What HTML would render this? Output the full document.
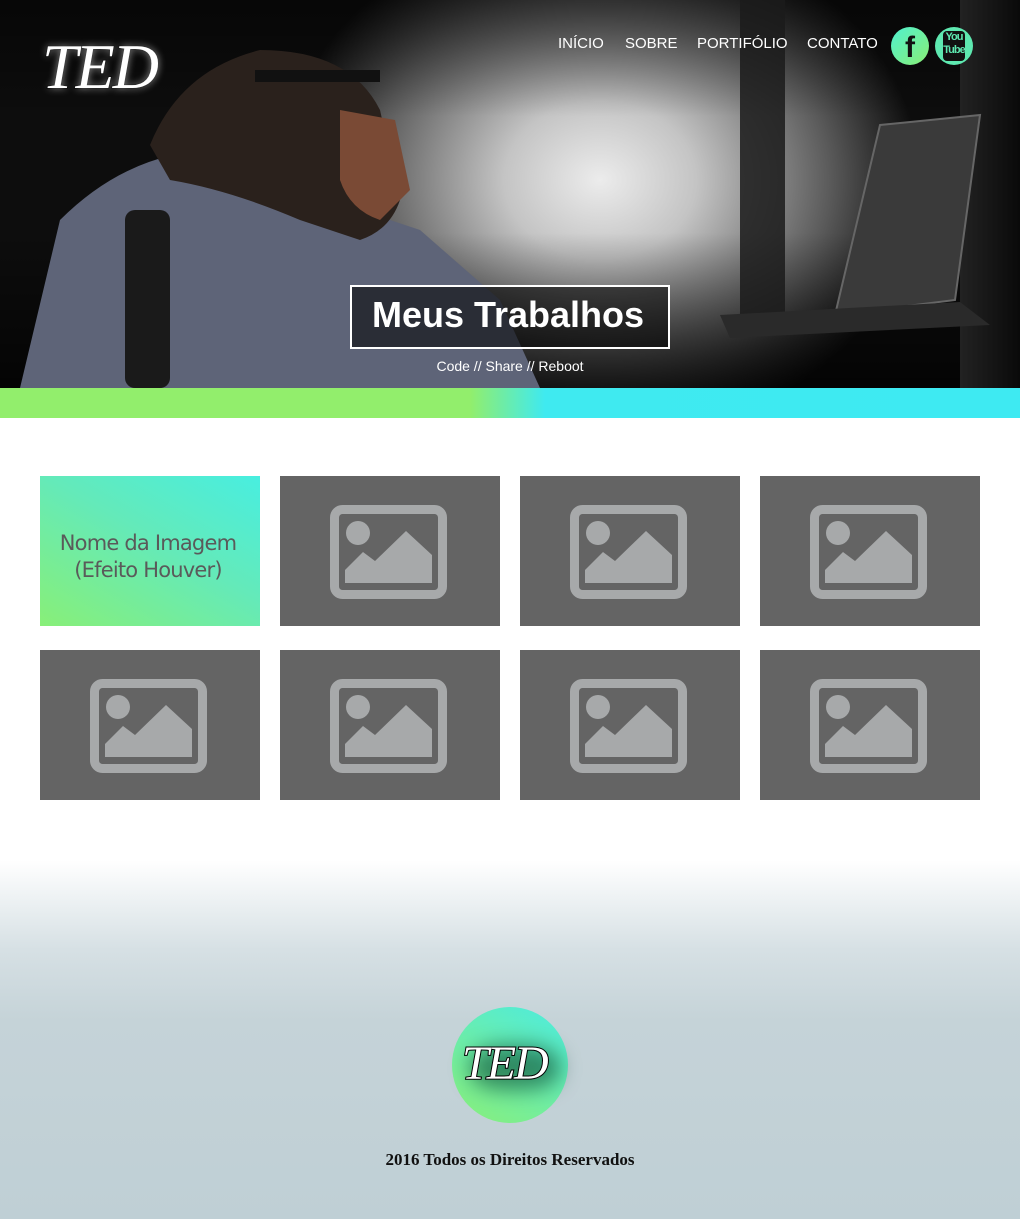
<!DOCTYPE html>
<html><head><meta charset="utf-8"><style>
body{margin:0;width:1020px;height:1219px;overflow:hidden;font-family:"Liberation Sans",sans-serif;background:#fff;position:relative}
.hero{position:absolute;left:0;top:0;width:1020px;height:388px;overflow:hidden;background:#111}
.abs{position:absolute}
.band{position:absolute;top:388px;left:0;width:1020px;height:30px;background:linear-gradient(90deg,#92ee6c 0,#92ee6c 470px,#3feaf0 545px,#3eeaf2 100%)}
.tile{position:absolute;width:220px;height:150px;background:#646464}
.tile svg{position:absolute;left:50px;top:29px}
.logo{font-family:"Liberation Serif",serif;font-style:italic;color:#fff;-webkit-text-stroke:2px #000;paint-order:stroke fill;letter-spacing:-2px}
nav a{position:absolute;top:35px;color:#fff;font-size:15px;text-decoration:none}
</style></head><body>
<div class="hero">
 <div class="abs" style="left:0;top:0;width:1020px;height:388px;background:radial-gradient(ellipse 320px 260px at 600px 180px,#ececec 0,#c4c4c4 30%,#5a5a5a 72%,#0d0d0d 100%)"></div>
 <div class="abs" style="left:0;top:0;width:1020px;height:388px;background:linear-gradient(180deg,rgba(0,0,0,.5) 0,rgba(0,0,0,0) 30%,rgba(0,0,0,0) 60%,rgba(0,0,0,.7) 100%)"></div>
 <div class="abs" style="left:740px;top:0;width:45px;height:320px;background:#1b1b1b;opacity:.85"></div>
 <div class="abs" style="left:960px;top:0;width:60px;height:388px;background:linear-gradient(90deg,#222,#0a0a0a)"></div>
 <svg class="abs" style="left:700px;top:110px" width="300" height="230"><polygon points="180,15 280,5 255,190 135,205" fill="#3a3a3a" stroke="#666" stroke-width="2"/><polygon points="20,205 260,192 290,215 30,228" fill="#2a2a2a"/></svg>
 <svg class="abs" style="left:0;top:30px" width="560" height="358"><path d="M20 358 L60 190 Q130 120 220 120 L330 170 L420 200 L500 270 L540 358Z" fill="#5e6478"/><path d="M150 115 Q180 40 260 20 Q350 20 380 80 L400 170 Q390 200 360 210 L300 190 Q230 160 170 150Z" fill="#2a211c"/><path d="M340 80 L395 90 L410 160 L380 190 Q350 180 340 150Z" fill="#7a4a35"/><rect x="255" y="40" width="125" height="12" fill="#111"/><rect x="125" y="180" width="45" height="178" rx="10" fill="#1a1a1a"/></svg>
 <div class="abs logo" style="left:42px;top:32px;font-size:64px;line-height:70px;text-shadow:0 0 8px rgba(255,255,255,.6)">TED</div>
 <nav><a style="left:558px">INÍCIO</a><a style="left:625px">SOBRE</a><a style="left:697px">PORTIFÓLIO</a><a style="left:807px">CONTATO</a></nav>
 <div class="abs" style="left:891px;top:27px;width:38px;height:38px;border-radius:50%;background:linear-gradient(135deg,#4ff0d0,#8aef74);color:#111;font:bold 30px 'Liberation Sans';text-align:center;line-height:42px">f</div>
 <div class="abs" style="left:935px;top:27px;width:38px;height:38px;border-radius:50%;background:#5ee8b0;"><div style="position:absolute;left:8px;top:4px;width:22px;height:30px;background:#111;border-radius:4px;color:#5ee8b0;font:bold 11px 'Liberation Sans';text-align:center;line-height:13px;letter-spacing:-1px">You<br>Tube</div></div>
 <div class="abs" style="left:350px;top:285px;width:316px;height:60px;border:2px solid #fff;background:rgba(0,0,0,.55)"></div>
 <div class="abs" style="left:350px;top:292px;width:316px;text-align:center;color:#fff;font-size:36px;font-weight:bold;line-height:46px">Meus Trabalhos</div>
 <div class="abs" style="left:350px;top:358px;width:320px;text-align:center;color:#fff;font-size:14px">Code // Share // Reboot</div>
</div>
<div class="band"></div>

<div class="tile" style="left:40px;top:476px;background:linear-gradient(30deg,#88ef78 0,#64eab9 55%,#48eee0 100%)"><div style="position:absolute;left:0;top:54px;width:216px;text-align:center;color:#5a5a5a;font:21px/27px 'DejaVu Sans','Liberation Sans',sans-serif;letter-spacing:-.8px">Nome da Imagem<br>(Efeito Houver)</div></div>
<svg width="0" height="0" style="position:absolute"><defs><g id="ic"><rect x="4.5" y="4.5" width="108" height="85" rx="8" fill="none" stroke="#a7a9aa" stroke-width="9"/><circle cx="28" cy="28" r="12" fill="#a7a9aa"/><polygon points="15,78 15,65 33,47 45,56 76,26 102,50 102,78" fill="#a7a9aa"/></g></defs></svg>
<div class="tile" style="left:280px;top:476px"><svg width="118" height="96"><use href="#ic"/></svg></div>
<div class="tile" style="left:520px;top:476px"><svg width="118" height="96"><use href="#ic"/></svg></div>
<div class="tile" style="left:760px;top:476px"><svg width="118" height="96"><use href="#ic"/></svg></div>
<div class="tile" style="left:40px;top:650px"><svg width="118" height="96"><use href="#ic"/></svg></div>
<div class="tile" style="left:280px;top:650px"><svg width="118" height="96"><use href="#ic"/></svg></div>
<div class="tile" style="left:520px;top:650px"><svg width="118" height="96"><use href="#ic"/></svg></div>
<div class="tile" style="left:760px;top:650px"><svg width="118" height="96"><use href="#ic"/></svg></div>

<div class="abs" style="left:0;top:860px;width:1020px;height:359px;background:linear-gradient(180deg,#fff 0,#d6e0e4 90px,#c5d3d8 160px,#bfcfd5 100%)"></div>
<div class="abs" style="left:452px;top:1007px;width:116px;height:116px;border-radius:50%;background:linear-gradient(30deg,#8aef78,#4cece0)"></div>
<div class="abs" style="left:470px;top:1045px;width:90px;height:45px;border-radius:40%;background:rgba(0,60,40,.55);filter:blur(10px)"></div>
<div class="abs logo" style="left:462px;top:1036px;font-size:48px;line-height:56px">TED</div>
<div class="abs" style="left:0;top:1150px;width:1020px;text-align:center;font:bold 17px 'Liberation Serif',serif;color:#111">2016 Todos os Direitos Reservados</div>
</body></html>
